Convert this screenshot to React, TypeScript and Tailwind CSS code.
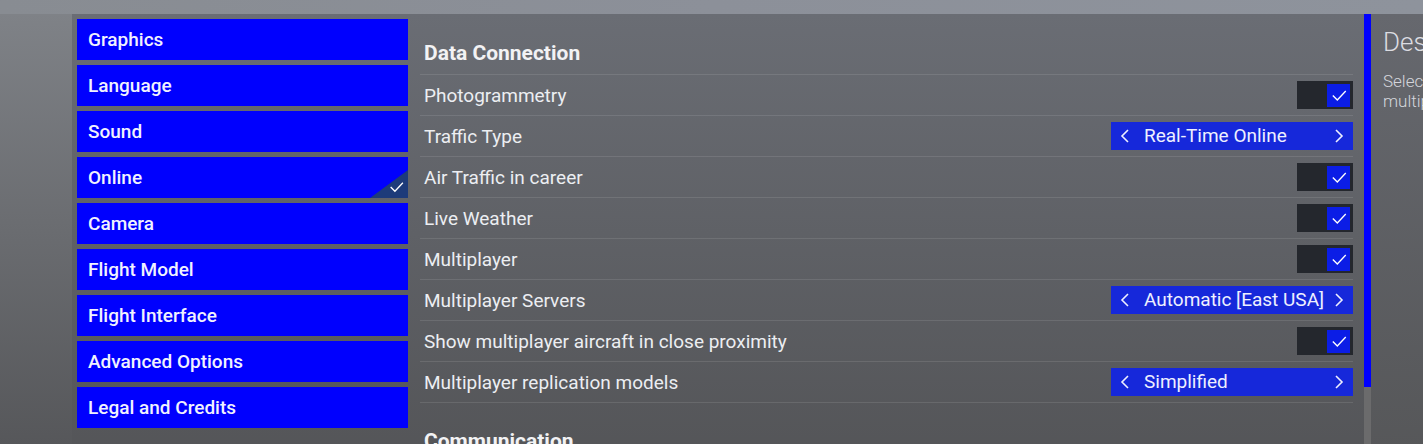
import React from "react";

const menu = [
  "Graphics",
  "Language",
  "Sound",
  "Online",
  "Camera",
  "Flight Model",
  "Flight Interface",
  "Advanced Options",
  "Legal and Credits",
];

type Row =
  | { label: string; kind: "toggle" }
  | { label: string; kind: "select"; value: string };

const rows: Row[] = [
  { label: "Photogrammetry", kind: "toggle" },
  { label: "Traffic Type", kind: "select", value: "Real-Time Online" },
  { label: "Air Traffic in career", kind: "toggle" },
  { label: "Live Weather", kind: "toggle" },
  { label: "Multiplayer", kind: "toggle" },
  { label: "Multiplayer Servers", kind: "select", value: "Automatic [East USA]" },
  { label: "Show multiplayer aircraft in close proximity", kind: "toggle" },
  { label: "Multiplayer replication models", kind: "select", value: "Simplified" },
];

function Check({ className = "" }: { className?: string }) {
  return (
    <svg viewBox="0 0 16 16" className={className} fill="none" stroke="currentColor" strokeWidth="1.2">
      <polyline points="2.5,8.5 6.5,12.5 14,4.5" />
    </svg>
  );
}

function Chevron({ dir }: { dir: "left" | "right" }) {
  return (
    <svg viewBox="0 0 10 16" className="h-[16px] w-[10px]" fill="none" stroke="currentColor" strokeWidth="1.6">
      {dir === "left" ? <polyline points="8,2 2,8 8,14" /> : <polyline points="2,2 8,8 2,14" />}
    </svg>
  );
}

function Toggle() {
  return (
    <div className="flex h-[28px] w-[56px] items-center justify-end bg-[#24272d] pr-[3px]">
      <div className="flex h-[23px] w-[23px] items-center justify-center bg-[#0b1de6] text-white">
        <Check className="h-[18px] w-[18px]" />
      </div>
    </div>
  );
}

function Selector({ value }: { value: string }) {
  return (
    <div className="flex h-[28px] w-[242px] items-center bg-[#1628da] pl-[9px] pr-[9px] text-[19px] text-[#eef0ff]">
      <Chevron dir="left" />
      <span className="ml-[14px] flex-1">{value}</span>
      <Chevron dir="right" />
    </div>
  );
}

export default function App() {
  return (
    <div
      className="flex h-[444px] w-[1423px] flex-col overflow-hidden bg-gradient-to-b from-[#8d9096] to-[#545558] text-white"
      style={{ fontFamily: "Roboto, 'Noto Sans', sans-serif" }}
    >
      <div className="h-[14px] shrink-0 bg-gradient-to-r from-[#888c92] via-[#8c9099] to-[#8e939c]" />
      <div className="flex flex-1">
        <div className="w-[72px] shrink-0 bg-gradient-to-b from-[#7f8287] to-[#555659]" />
        <div className="flex flex-1 bg-gradient-to-b from-[#6a6d74] to-[#545558]">
          {/* sidebar */}
          <nav className="flex w-[336px] shrink-0 flex-col gap-[5px] pl-[5px] pt-[5px]">
            {menu.map((m) => (
              <div
                key={m}
                className="relative flex h-[41px] w-[331px] items-center bg-[#0000fe] pl-[11px] pt-[1px] text-[19px] font-medium text-[#f1f2ff]"
              >
                {m}
                {m === "Online" && (
                  <div className="absolute bottom-0 right-0 h-[28px] w-[38px]">
                    <svg viewBox="0 0 38 28" className="absolute inset-0 h-full w-full">
                      <polygon points="0,28 38,0 38,28" fill="#1d3b7a" />
                    </svg>
                    <Check className="absolute bottom-[3px] right-[3px] h-[17px] w-[17px] text-white" />
                  </div>
                )}
              </div>
            ))}
          </nav>

          {/* content */}
          <section className="ml-[12px] w-[933px] shrink-0">
            <div className="flex h-[60px] items-end pb-[5px] pl-[4px] text-[21px] font-bold text-[#f2f2f4]">
              Data Connection
            </div>
            {rows.map((r) => (
              <div
                key={r.label}
                className="flex h-[41px] items-center justify-between border-t border-white/10 pl-[4px] text-[19px] text-[#eceef2]"
              >
                <span className="pt-[2px]">{r.label}</span>
                {r.kind === "toggle" ? <Toggle /> : <Selector value={r.value} />}
              </div>
            ))}
            <div className="border-t border-white/10" />
            <div className="flex h-[54px] items-end pl-[4px] text-[21px] font-bold text-[#f2f2f4]">
              Communication
            </div>
          </section>

          {/* scrollbar */}
          <div className="ml-[11px] flex w-[7px] shrink-0 flex-col bg-[#6b6b6c]">
            <div className="h-[373px] bg-[#0000fe]" />
          </div>

          {/* description */}
          <aside className="min-w-0 flex-1 overflow-hidden bg-gradient-to-b from-[#66686e] to-[#565759] pl-[12px] pt-[11px] text-[#dcdde2]">
            <div className="whitespace-nowrap text-[26px] font-light leading-[34px]">Description</div>
            <div className="mt-[12px] whitespace-nowrap text-[17px] font-light leading-[20px] text-[#d4d6dc]">
              Select
              <br />
              multiplayer
            </div>
          </aside>
        </div>
      </div>
    </div>
  );
}
